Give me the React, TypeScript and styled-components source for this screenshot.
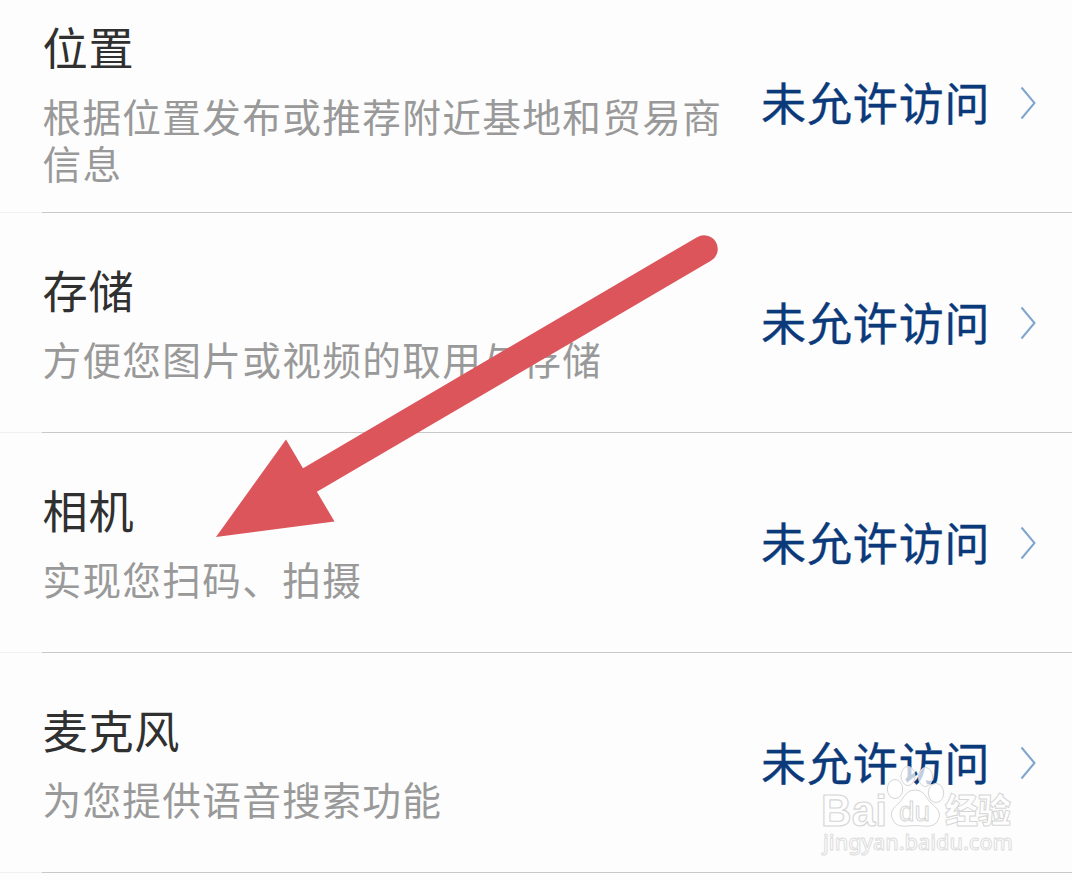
import styled, { createGlobalStyle } from 'styled-components';
import React, { ReactElement } from 'react';

interface Permission {
  name: string;
  description: string;
}

const permissions: Permission[] = [
  { name: '位置', description: '根据位置发布或推荐附近基地和贸易商信息' },
  { name: '存储', description: '方便您图片或视频的取用与存储' },
  { name: '相机', description: '实现您扫码、拍摄' },
  { name: '麦克风', description: '为您提供语音搜索功能' },
];

const GlobalStyle = createGlobalStyle`
  * {
    box-sizing: border-box;
  }

  body {
    margin: 0;
    background: #fdfdfd;
    font-family: 'Noto Sans CJK SC', sans-serif;
  }
`;

const Page = styled.main`
  position: relative;
  width: 1072px;
  height: 880px;
  overflow: hidden;
`;

/* the list is scrolled a few pixels past the top of the first row */
const List = styled.ul`
  margin: -7px 0 0;
  padding: 0;
  list-style: none;
`;

const Row = styled.li`
  height: 220px;
  display: flex;
  flex-direction: column;
`;

const RowContent = styled.div`
  flex: 1;
  display: flex;
  align-items: center;
  padding: 0 35px 0 42.4px;
`;

const Info = styled.div`
  width: 700px;
  margin-right: 18.6px;
  padding-bottom: 2px;
`;

const Name = styled.h2`
  margin: 0 0 16px;
  color: #303030;
  font-size: 45.2px;
  font-weight: 400;
  line-height: 58px;
  letter-spacing: 0.8px;
`;

const Description = styled.p`
  margin: 0;
  color: #999;
  font-size: 38.7px;
  font-weight: 400;
  line-height: 47px;
  letter-spacing: 1.3px;
`;

const Status = styled.span`
  flex: 1;
  padding-bottom: 2px;
  color: #0b3a7b;
  font-size: 45px;
  line-height: 62px;
  letter-spacing: 0.9px;
  white-space: nowrap;
  -webkit-text-stroke: 0.4px #0b3a7b;
`;

const Divider = styled.div`
  height: 1px;
  background: linear-gradient(to right, #f0f0f0 42px, #c9c9c9 42px);
`;

const Arrow = styled.svg`
  position: absolute;
  top: 225px;
  left: 205px;
`;

const Watermark = styled.svg`
  position: absolute;
  top: 760px;
  left: 810px;
`;

const Chevron = (): ReactElement => (
  <svg width="17" height="34" viewBox="0 0 17 34" fill="none">
    <path d="M1.5 1.5 14.500 17 1.5 32.500" stroke="#7fa5cc" strokeWidth="2" />
  </svg>
);

const BaiduMark = (): ReactElement => (
  <Watermark width="220" height="115" viewBox="810 760 220 115">
    <g
      fill="#fff"
      fillOpacity="0.75"
      stroke="#d6d6d6"
      strokeWidth="1"
      strokeLinejoin="round"
      fontWeight="700"
    >
      <ellipse cx="895" cy="789" rx="7.7" ry="9.5" />
      <ellipse cx="908" cy="776" rx="7" ry="9.5" />
      <ellipse cx="925.5" cy="777" rx="7" ry="9.5" />
      <ellipse cx="936" cy="793" rx="7.7" ry="9.5" />
      <path d="M915 790C906 790 904 798 899 803C893 808 889 813 893 820C897 829 908 825.500 915 825.500C923 825.500 934 829 938 820C942 813 937 808 931 803C926 798 924 790 915 790Z" />
      <text
        x="821"
        y="825.5"
        fontSize="45"
        fontFamily="'Liberation Sans', sans-serif"
        textLength="66"
        lengthAdjust="spacingAndGlyphs"
        strokeWidth="1.2"
      >
        Bai
      </text>
      <text
        x="899"
        y="820.5"
        fontSize="27"
        fontFamily="'Liberation Sans', sans-serif"
        fontWeight="400"
        textLength="31"
        lengthAdjust="spacingAndGlyphs"
      >
        du
      </text>
      <text
        x="945"
        y="823"
        fontSize="34"
        fontFamily="'Noto Sans CJK SC', sans-serif"
        fontWeight="900"
        textLength="66"
        lengthAdjust="spacingAndGlyphs"
      >
        经验
      </text>
      <text
        x="823"
        y="850"
        fontSize="22.5"
        fontFamily="'Noto Sans', sans-serif"
        fontWeight="500"
        textLength="190"
        lengthAdjust="spacingAndGlyphs"
        stroke="#dcdcdc"
      >
        jingyan.baidu.com
      </text>
    </g>
  </Watermark>
);

export default (): ReactElement => (
  <Page>
    <GlobalStyle />
    <List>
      {permissions.map(({ name, description }) => (
        <Row key={name}>
          <RowContent>
            <Info>
              <Name>{name}</Name>
              <Description>{description}</Description>
            </Info>
            <Status>未允许访问</Status>
            <Chevron />
          </RowContent>
          <Divider />
        </Row>
      ))}
    </List>
    <Arrow width="525" height="325" viewBox="205 225 525 325">
      <path d="M310 480 704 249" stroke="#dc555b" strokeWidth="27.5" strokeLinecap="round" />
      <path d="M216 537 286 439.500 334.500 521.500Z" fill="#dc555b" />
    </Arrow>
    <BaiduMark />
  </Page>
);
